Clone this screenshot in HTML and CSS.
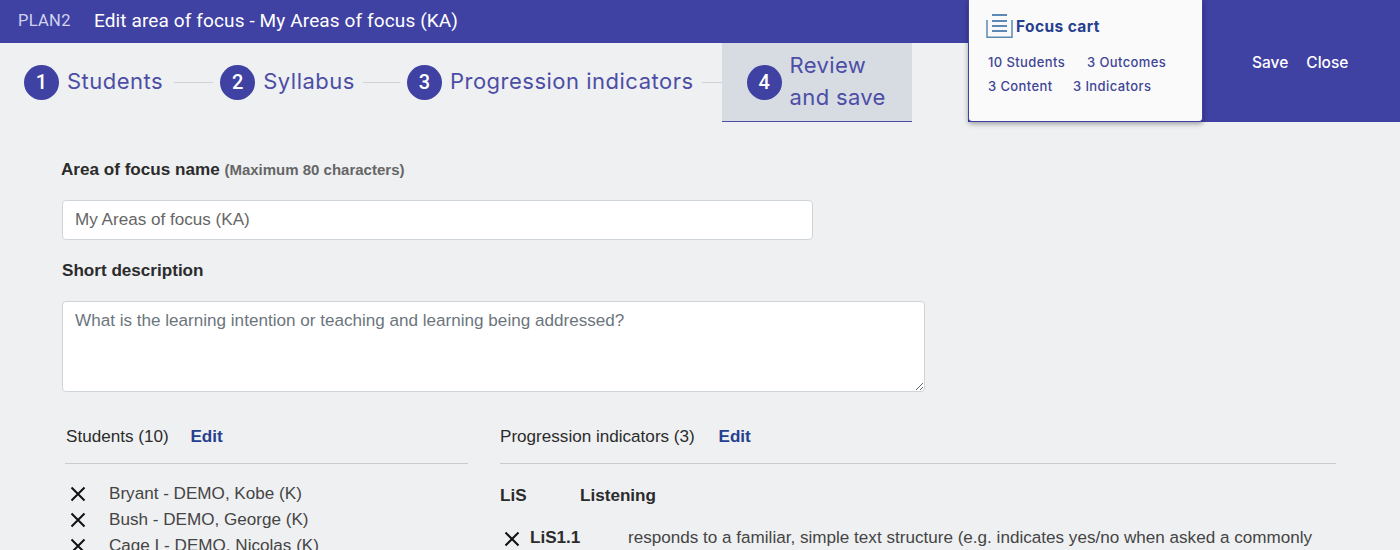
FILE: index.html
```html
<!DOCTYPE html>
<html lang="en">
<head>
  <meta charset="UTF-8">
  <title>Edit area of focus</title>
  <link rel="stylesheet" href="styles.css">
</head>
<body>
  <div class="top">
    <div class="top-main">
      <header class="titlebar">
        <span class="brand">PLAN2</span>
        <span class="page-title">Edit area of focus - My Areas of focus (KA)</span>
      </header>
      <nav class="steps">
        <a class="step"><span class="num">1</span>Students</a>
        <span class="line line-1"></span>
        <a class="step"><span class="num">2</span>Syllabus</a>
        <span class="line line-2"></span>
        <a class="step"><span class="num">3</span>Progression indicators</a>
        <span class="line line-3"></span>
        <a class="step active"><span class="num">4</span><span class="wrap">Review<br>and save</span></a>
      </nav>
    </div>
    <div class="top-side">
      <div class="cart">
        <div class="cart-title">
          <svg class="cart-icon" width="28" height="26" viewBox="0 0 28 26" fill="none" stroke="#5b8ab5" stroke-width="1.5">
            <path d="M2 7v17.200h25V7"/>
            <path d="M7 2h15M7 8h15M7 13h15M7 18h15" stroke-width="2"/>
          </svg>
          Focus cart
        </div>
        <div class="cart-row"><span class="c-students">10 Students</span><span>3 Outcomes</span></div>
        <div class="cart-row"><span class="c-content">3 Content</span><span>3 Indicators</span></div>
      </div>
      <div class="actions">
        <a>Save</a>
        <a>Close</a>
      </div>
    </div>
  </div>

  <main class="content">
    <label class="label label-name">Area of focus name <small>(Maximum 80 characters)</small></label>
    <input class="field" type="text" value="My Areas of focus (KA)">
    <label class="label label-desc">Short description</label>
    <textarea class="area" placeholder="What is the learning intention or teaching and learning being addressed?"></textarea>

    <div class="columns">
      <section class="students">
        <div class="col-head">Students (10) <a>Edit</a></div>
        <ul class="student-list">
          <li><svg class="x" width="16" height="16" viewBox="0 0 16 16"><path d="M1.500 1.500l13 13M14.500 1.500l-13 13"/></svg>Bryant - DEMO, Kobe (K)</li>
          <li><svg class="x" width="16" height="16" viewBox="0 0 16 16"><path d="M1.500 1.500l13 13M14.500 1.500l-13 13"/></svg>Bush - DEMO, George (K)</li>
          <li><svg class="x" width="16" height="16" viewBox="0 0 16 16"><path d="M1.500 1.500l13 13M14.500 1.500l-13 13"/></svg>Cage I - DEMO, Nicolas (K)</li>
        </ul>
      </section>
      <section class="indicators">
        <div class="col-head">Progression indicators (3) <a>Edit</a></div>
        <div class="strand"><b>LiS</b><b>Listening</b></div>
        <div class="indicator">
          <svg class="x" width="16" height="16" viewBox="0 0 16 16"><path d="M1.500 1.500l13 13M14.500 1.500l-13 13"/></svg>
          <b>LiS1.1</b>
          <span>responds to a familiar, simple text structure (e.g. indicates yes/no when asked a commonly used question)</span>
        </div>
      </section>
    </div>
  </main>
</body>
</html>
```

FILE: styles.css
```css
html, body { height: 550px; overflow: hidden; }
body { margin: 0; background: #eff0f2; color: #2b2b2b; font-family: "Liberation Sans", sans-serif; font-size: 17.1px; }
a { cursor: pointer; }

.top { display: flex; height: 122px; }
.top-main { width: 968px; }
.top-side { flex: 1; display: flex; background: #3f41a3; }

.titlebar { height: 43px; box-sizing: border-box; padding: 0 0 3px 18px; display: flex; align-items: center; background: #3f41a3; color: #fff; font-family: Roboto, sans-serif; }
.brand { width: 76px; font-size: 16.5px; letter-spacing: .3px; color: #cfd3ee; }
.page-title { font-size: 19px; letter-spacing: .12px; }

.steps { display: flex; align-items: center; height: 79px; padding-left: 24px; font-family: Inter, sans-serif; font-size: 22px; letter-spacing: .5px; color: #4c4ea6; }
.step { display: flex; align-items: center; height: 100%; box-sizing: border-box; padding-bottom: 3px; }
.num { width: 35px; height: 35px; margin: 3px 8px 0 0; border-radius: 50%; background: #3f41a3; color: #fff; font-family: Roboto, sans-serif; font-size: 20px; font-weight: 500; letter-spacing: 0; line-height: 35px; text-align: center; }
.line { height: 1px; background: #cfd2d6; }
.line-1 { width: 39px; margin: 0 7px 0 11px; }
.line-2 { width: 37px; margin: 0 7px 0 8px; }
.line-3 { width: 20px; margin-left: 8px; }
.step.active { width: 190px; padding: 0 0 2px 25px; background: #d7dbe2; border-bottom: 1px solid #4c4ea6; letter-spacing: .35px; }
.step.active .num { margin-top: 2px; }
.wrap { line-height: 32px; }

.cart { width: 235px; height: 122px; box-sizing: border-box; padding: 14px 18px 0 19px; background: #fafafa; border: 1px solid #3f41a3; border-top: 0; border-radius: 0 0 4px 4px; box-shadow: 0 2px 5px rgba(0, 0, 0, .35); color: #3f4596; font-family: Inter, sans-serif; font-size: 13px; font-weight: 500; letter-spacing: .4px; }
.cart-title { display: flex; align-items: center; gap: 3px; margin-left: -3px; height: 24px; margin-bottom: 12px; color: #26408f; font-size: 15.5px; font-weight: 700; letter-spacing: .4px; }
.cart-icon { flex: none; }
.cart-row { display: flex; height: 24px; align-items: center; }
.c-students { width: 99px; }
.c-content { width: 85px; }

.actions { flex: 1; display: flex; gap: 18px; align-items: center; padding: 2px 0 0 49px; color: #fff; font-family: Inter, sans-serif; font-size: 15.5px; font-weight: 500; }

.content { padding: 0 64px 0 62px; }
.label { display: block; font-weight: 700; }
.label small { color: #666; font-size: 15px; }
.label-name { margin-top: 38px; line-height: 19px; margin-left: -1px; }
.label-desc { margin-top: 21px; line-height: 19px; }
.field, .area { display: block; box-sizing: border-box; border: 1px solid #ced4da; border-radius: 4px; background: #fff; color: #666; font-family: "Liberation Sans", sans-serif; font-size: 17.1px; padding: 0 12px; }
.field { width: 751px; height: 40px; margin-top: 21px; }
.area { width: 863px; height: 91px; margin-top: 21px; padding-top: 9px; }
.area::placeholder { color: #6c757d; opacity: 1; }

.columns { display: flex; margin-top: 35px; margin-left: 3px; }
.students { width: 403px; margin-right: 32px; }
.students .col-head { padding-left: 1px; }
.indicators { flex: 1; }
.indicators .col-head a { margin-left: 19px; }
.col-head { height: 36px; border-bottom: 1px solid #ccc; line-height: 20px; color: #2b2b2b; }
.col-head a { margin-left: 17px; color: #26408f; font-weight: 700; }

.x { flex: none; fill: none; stroke: #111; stroke-width: 2; }
.student-list { list-style: none; margin: 17px 0 0; padding: 0; }
.student-list li { display: flex; align-items: center; height: 26px; color: #444; }
.student-list .x { margin: 0 23px 0 5px; }

.strand { display: flex; margin-top: 22px; line-height: 19px; }
.strand b:first-child { width: 80px; }
.indicator { display: flex; align-items: flex-start; margin-top: 23px; line-height: 20px; color: #444; }
.indicator .x { margin: 3px 10px 0 4px; }
.indicator b { flex: none; width: 98px; color: #2b2b2b; }
```
